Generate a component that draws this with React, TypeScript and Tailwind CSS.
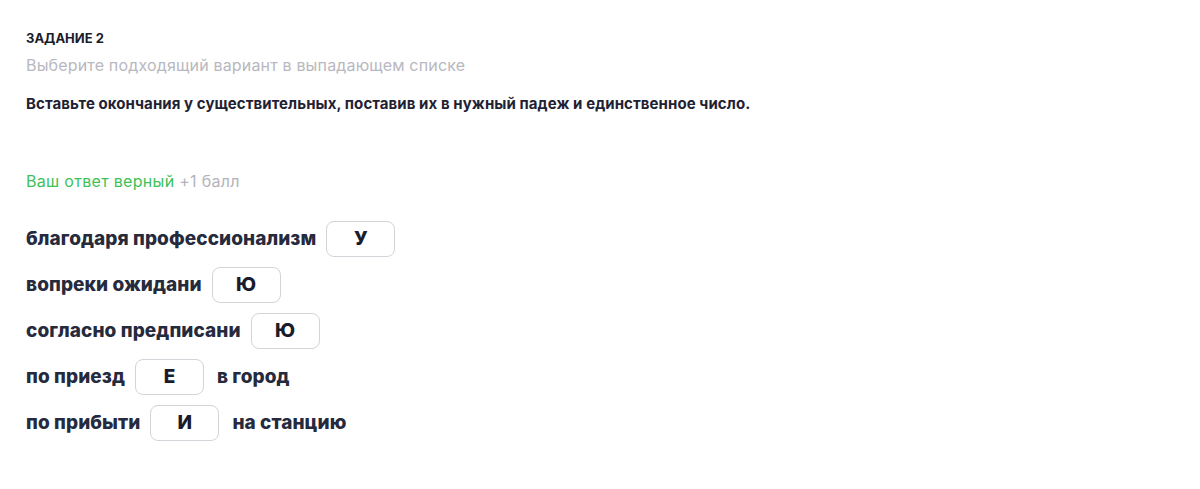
import React from "react";

const Box = ({ v }: { v: string }) => (
  <span className="inline-flex h-[36px] w-[69px] items-center justify-center rounded-[8px] border border-[#d3d3d9] bg-white text-[19px] font-extrabold text-[#1a1c2b]">
    {v}
  </span>
);

export default function App() {
  return (
    <div
      className="min-h-[489px] w-[1200px] bg-white pl-[26px] pt-[30px] text-[#1f2233]"
      style={{ fontFamily: "Inter, 'Noto Sans', sans-serif" }}
    >
      <div className="text-[13px] font-bold leading-[17px] text-[#1a1c2b]">ЗАДАНИЕ 2</div>
      <div className="mt-[8px] text-[16px] tracking-[0.17px] leading-[20px] text-[#b8b8c0]">
        Выберите подходящий вариант в выпадающем списке
      </div>
      <div className="mt-[19px] text-[15px] tracking-[0.08px] font-bold leading-[20px] text-[#1f2233]">
        Вставьте окончания у существительных, поставив их в нужный падеж и единственное число.
      </div>
      <div className="mt-[57px] text-[16px] tracking-[0.3px] leading-[20px]">
        <span className="text-[#3ec157]">Ваш ответ верный</span>{" "}
        <span className="text-[#b3b3bb]">+1 балл</span>
      </div>
      <div className="mt-[30px] flex flex-col gap-[10px] text-[19px] tracking-[0.08px] font-extrabold text-[#262a3d]">
        <div className="flex items-center gap-[10px]">
          <span>благодаря профессионализм</span>
          <Box v="У" />
        </div>
        <div className="flex items-center gap-[10px]">
          <span>вопреки ожидани</span>
          <Box v="Ю" />
        </div>
        <div className="flex items-center gap-[10px]">
          <span>согласно предписани</span>
          <Box v="Ю" />
        </div>
        <div className="flex items-center gap-[10px]">
          <span>по приезд</span>
          <Box v="Е" />
          <span className="ml-[3px]">в город</span>
        </div>
        <div className="flex items-center gap-[10px]">
          <span>по прибыти</span>
          <Box v="И" />
          <span className="ml-[3px]">на станцию</span>
        </div>
      </div>
    </div>
  );
}
